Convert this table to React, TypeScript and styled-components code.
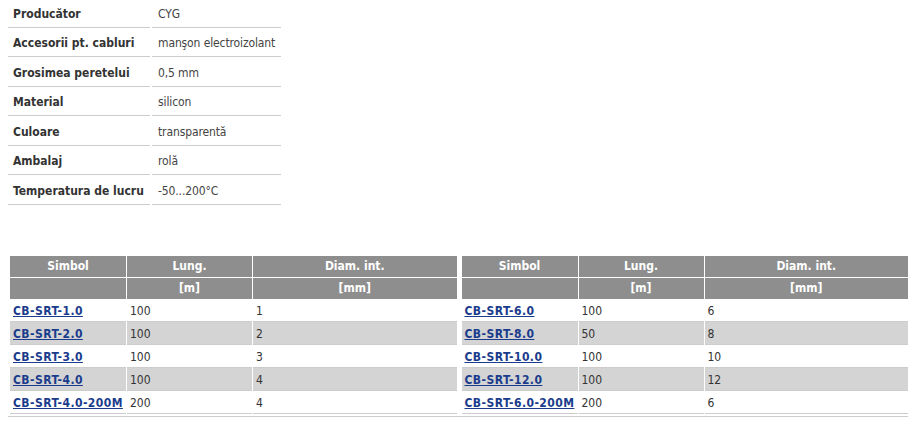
import React from 'react'
import styled, { createGlobalStyle } from 'styled-components'

const GlobalStyle = createGlobalStyle`
	body {
		margin: 0;
		background: #ffffff;
		font-family: 'DejaVu Sans Condensed', 'DejaVu Sans', Verdana, sans-serif;
		font-size: 12px;
		color: #333333;
	}
`

const Page = styled.div`
	padding: 0 1px 0 8px;
`

const SpecTable = styled.table`
	border-collapse: separate;
	border-spacing: 2px 0;
	margin: -2px 0 0 -2px;
	width: 277px;
`

const SpecLabel = styled.td`
	width: 137px;
	height: 25.5px;
	padding: 3px 0 0 5px;
	font-weight: bold;
	color: #333333;
	border-bottom: 1px solid #cccccc;
	white-space: nowrap;
`

const SpecValue = styled.td`
	padding: 3px 0 0 6px;
	color: #444444;
	letter-spacing: -0.12px;
	border-bottom: 1px solid #cccccc;
	white-space: nowrap;
`

const Tables = styled.div`
	display: flex;
	gap: 5px;
	margin-top: 51px;
	padding: 0 0 2px 2px;
	border-bottom: 1px solid #cccccc;
`

const DataTable = styled.table`
	flex: 1;
	border-collapse: separate;
	border-spacing: 1px 0;
	margin: 0 -1px;
`

const HeadCell = styled.th<{ $w?: number; $top?: boolean }>`
	width: ${(p) => (p.$w ? `${p.$w}px` : 'auto')};
	height: 21px;
	padding: 0;
	background: #8e8e8e;
	color: #ffffff;
	font-weight: bold;
	text-align: center;
	border-bottom: ${(p) => (p.$top ? '1px solid #ffffff' : 'none')};
`

const Row = styled.tr<{ $alt: boolean }>`
	background: ${(p) => (p.$alt ? '#d4d4d4' : '#ffffff')};
`

const Cell = styled.td`
	height: 20.1px;
	padding: 2px 0 0 3px;
	border-bottom: 1px solid #cccccc;
	color: #333333;
	white-space: nowrap;
`

const Code = styled.a`
	color: #1b3c8c;
	font-weight: bold;
	letter-spacing: 0.45px;
	text-decoration: underline;
	cursor: pointer;
`

const specs: [string, string][] = [
	['Producător', 'CYG'],
	['Accesorii pt. cabluri', 'manşon electroizolant'],
	['Grosimea peretelui', '0,5 mm'],
	['Material', 'silicon'],
	['Culoare', 'transparentă'],
	['Ambalaj', 'rolă'],
	['Temperatura de lucru', '-50...200°C'],
]

type Item = [string, string, string]

const left: Item[] = [
	['CB-SRT-1.0', '100', '1'],
	['CB-SRT-2.0', '100', '2'],
	['CB-SRT-3.0', '100', '3'],
	['CB-SRT-4.0', '100', '4'],
	['CB-SRT-4.0-200M', '200', '4'],
]

const right: Item[] = [
	['CB-SRT-6.0', '100', '6'],
	['CB-SRT-8.0', '50', '8'],
	['CB-SRT-10.0', '100', '10'],
	['CB-SRT-12.0', '100', '12'],
	['CB-SRT-6.0-200M', '200', '6'],
]

const ProductTable: React.FC<{ items: Item[] }> = ({ items }) => (
	<DataTable>
		<thead>
			<tr>
				<HeadCell $w={116} $top>
					Simbol
				</HeadCell>
				<HeadCell $w={125} $top>
					Lung.
				</HeadCell>
				<HeadCell $top>Diam. int.</HeadCell>
			</tr>
			<tr>
				<HeadCell />
				<HeadCell>[m]</HeadCell>
				<HeadCell>[mm]</HeadCell>
			</tr>
		</thead>
		<tbody>
			{items.map(([code, len, diam], i) => (
				<Row key={code} $alt={i % 2 === 1}>
					<Cell>
						<Code>{code}</Code>
					</Cell>
					<Cell>{len}</Cell>
					<Cell>{diam}</Cell>
				</Row>
			))}
		</tbody>
	</DataTable>
)

const App: React.FC = () => (
	<>
		<GlobalStyle />
		<Page>
			<SpecTable>
				<tbody>
					{specs.map(([label, value]) => (
						<tr key={label}>
							<SpecLabel>{label}</SpecLabel>
							<SpecValue>{value}</SpecValue>
						</tr>
					))}
				</tbody>
			</SpecTable>
			<Tables>
				<ProductTable items={left} />
				<ProductTable items={right} />
			</Tables>
		</Page>
	</>
)

export default App
